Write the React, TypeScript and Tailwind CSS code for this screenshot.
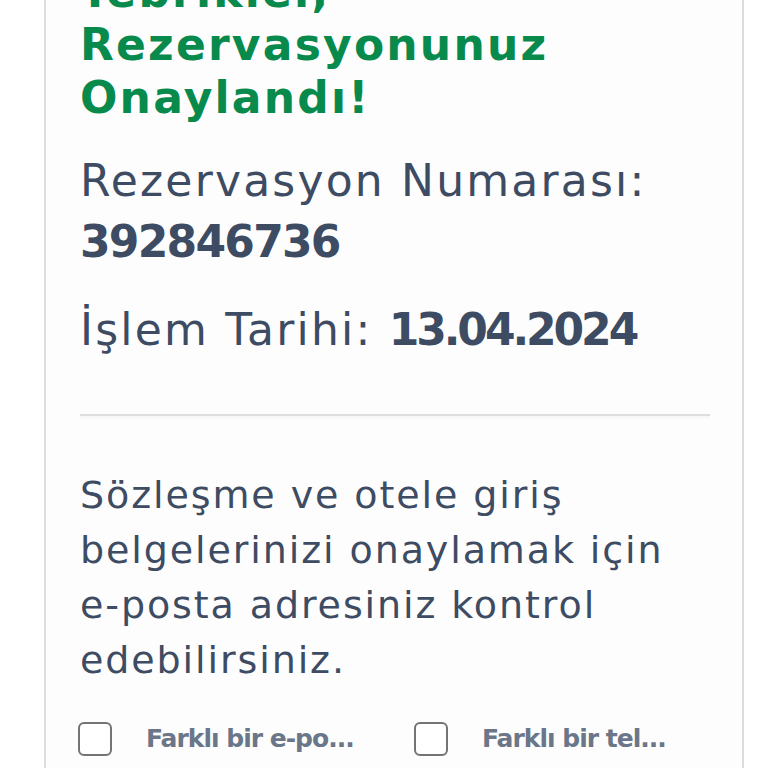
import { useState } from 'react'

const font = { fontFamily: '"DejaVu Sans", "Noto Sans", sans-serif' }

function Check({ label, className = '' }: { label: string; className?: string }) {
  const [on, setOn] = useState(false)
  return (
    <label className={`flex items-center gap-[34px] ${className}`}>
      <button
        type="button"
        onClick={() => setOn(!on)}
        className="h-[34px] w-[34px] shrink-0 rounded-[6px] border-2 border-[#747474] bg-white"
        aria-pressed={on}
      />
      <span className="whitespace-nowrap text-[25px] font-bold tracking-[-0.04em] text-[#6b7689]">{label}</span>
    </label>
  )
}

export default function App() {
  return (
    <main className="h-screen overflow-hidden bg-white" style={font}>
      <section className="-mt-[35px] ml-[44px] mr-[24px] border-x-2 border-[#dcdcdc] bg-[#fdfdfd] pl-[34px] pr-[32px] pb-10">
        <h1 className="text-[44px] leading-[53px] font-bold tracking-[0.05em] text-[#088a4c]">
          Tebrikler, Rezervasyonunuz Onaylandı!
        </h1>
        <p className="mt-[26px] text-[44px] leading-[61px] tracking-[0.05em] text-[#3d4b63]">
          Rezervasyon Numarası: <b className="tracking-[-0.04em]">392846736</b>
        </p>
        <p className="mt-[27px] text-[44px] leading-[61px] tracking-[0.05em] text-[#3d4b63]">
          İşlem Tarihi: <b className="tracking-[-0.07em]">13.04.2024</b>
        </p>
        <div className="mt-[54px] h-[2px] bg-[#dedede] shadow-[0_2px_2px_rgba(0,0,0,0.04)]" />
        <p className="mt-[52px] text-[38px] leading-[55px] tracking-[0.05em] text-[#3d4b63]">
          Sözleşme ve otele giriş belgelerinizi onaylamak için e-posta adresiniz kontrol edebilirsiniz.
        </p>
        <div className="mt-[32px] grid grid-cols-2 gap-x-[38px]">
          <Check label="Farklı bir e-po..." className="-ml-[2px]" />
          <Check label="Farklı bir tel..." />
        </div>
      </section>
    </main>
  )
}
